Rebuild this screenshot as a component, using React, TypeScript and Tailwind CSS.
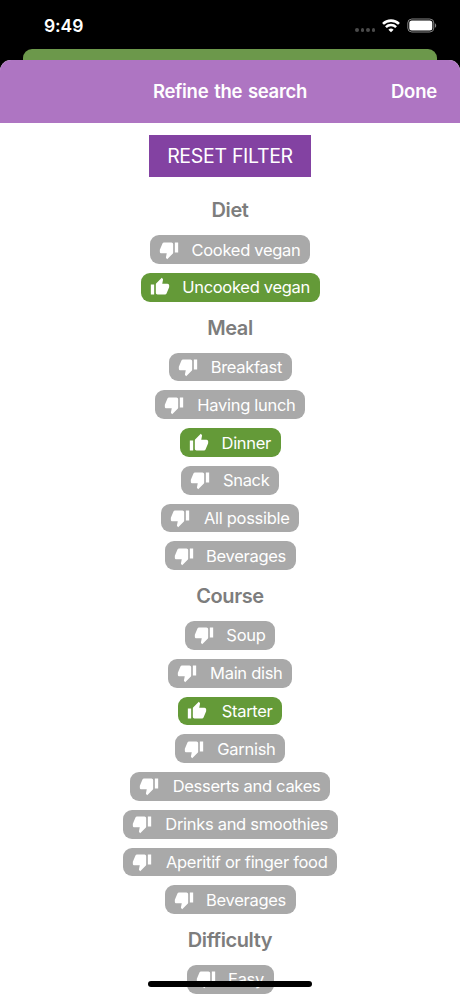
import { useState } from 'react';
import { MdThumbDown, MdThumbUp } from 'react-icons/md';
import clsx from 'clsx';

interface FilterOption {
  id: string;
  label: string;
  width: number;
}

interface FilterGroup {
  title: string;
  options: FilterOption[];
}

const groups: FilterGroup[] = [
  {
    title: 'Diet',
    options: [
      { id: 'cooked', label: 'Cooked vegan', width: 160 },
      { id: 'uncooked', label: 'Uncooked vegan', width: 179 },
    ],
  },
  {
    title: 'Meal',
    options: [
      { id: 'breakfast', label: 'Breakfast', width: 123 },
      { id: 'lunch', label: 'Having lunch', width: 150 },
      { id: 'dinner', label: 'Dinner', width: 101 },
      { id: 'snack', label: 'Snack', width: 98 },
      { id: 'all', label: 'All possible', width: 138 },
      { id: 'meal-beverages', label: 'Beverages', width: 131 },
    ],
  },
  {
    title: 'Course',
    options: [
      { id: 'soup', label: 'Soup', width: 90 },
      { id: 'main', label: 'Main dish', width: 124 },
      { id: 'starter', label: 'Starter', width: 104 },
      { id: 'garnish', label: 'Garnish', width: 110 },
      { id: 'desserts', label: 'Desserts and cakes', width: 200 },
      { id: 'drinks', label: 'Drinks and smoothies', width: 215 },
      { id: 'aperitif', label: 'Aperitif or finger food', width: 214 },
      { id: 'course-beverages', label: 'Beverages', width: 131 },
    ],
  },
  {
    title: 'Difficulty',
    options: [{ id: 'easy', label: 'Easy', width: 87 }],
  },
];

function StatusBar() {
  return (
    <div className="flex h-[49px] shrink-0 items-start justify-between pl-[44px] pr-[23px] text-white">
      <span className="mt-[14px] text-[17.5px] font-semibold leading-[24px] tracking-[-0.1px]">9:49</span>
      <div className="mt-[18px] flex items-center">
        <div className="mr-[7px] mt-[9px] flex gap-[2px]">
          {[0, 1, 2, 3].map((dot) => (
            <span key={dot} className="h-[3.5px] w-[3.5px] rounded-full bg-[#4b4b4b]" />
          ))}
        </div>
        <svg className="mr-[7px] h-[14px] w-[18px]" viewBox="0 0 18 14" fill="none" stroke="white">
          <path d="M1 4.9a11.4 11.4 0 0 1 16 0" strokeWidth="2.6" />
          <path d="M3.9 8.2a7.3 7.3 0 0 1 10.2 0" strokeWidth="2.5" />
          <path d="M9 13.3L6.4 10.8a3.7 3.7 0 0 1 5.2 0z" fill="white" stroke="none" />
        </svg>
        <svg className="h-[15px] w-[30px]" viewBox="0 0 30 15">
          <rect x="0.8" y="1" width="26" height="13" rx="4" fill="none" stroke="#858585" strokeWidth="1" />
          <rect x="2.3" y="2.5" width="23" height="10" rx="2.5" fill="white" />
          <path d="M28 5.2c1.6.8 1.6 3.8 0 4.6z" fill="#858585" />
        </svg>
      </div>
    </div>
  );
}

interface ChipProps {
  option: FilterOption;
  active: boolean;
  onToggle: () => void;
}

function Chip({ option, active, onToggle }: ChipProps) {
  const Icon = active ? MdThumbUp : MdThumbDown;

  return (
    <button
      type="button"
      onClick={onToggle}
      style={{ width: option.width }}
      className={clsx(
        'mb-[9px] flex h-[28.75px] shrink-0 items-center justify-between whitespace-nowrap rounded-[9px] pl-[9px] pr-[9.5px] text-white',
        active ? 'bg-[#649a38]' : 'bg-[#a9a9a9]'
      )}
    >
      <Icon className="h-[20px] w-[20px] shrink-0" />
      <span className="text-[16.5px] leading-[24px] tracking-[-0.3px]">{option.label}</span>
    </button>
  );
}

export default function App() {
  const [selected, setSelected] = useState<string[]>(['uncooked', 'dinner', 'starter']);

  const toggle = (id: string) => {
    setSelected((prev) => (prev.includes(id) ? prev.filter((item) => item !== id) : [...prev, id]));
  };

  return (
    <div className="relative flex h-[996px] w-[460px] flex-col overflow-hidden bg-black font-['Inter',sans-serif]">
      <StatusBar />
      {/* edge of the screen underneath the sheet */}
      <div className="mx-[23px] h-[11px] shrink-0 rounded-t-[9px] bg-[#6c984b]" />

      <div className="flex min-h-0 flex-1 flex-col overflow-hidden rounded-t-[11px] bg-white">
        <header className="grid h-[63px] shrink-0 grid-cols-[1fr_auto_1fr] items-center bg-[#ae75c2] text-[18.5px] font-semibold text-white">
          <h1 className="col-start-2 tracking-[-0.3px] [word-spacing:1.5px]">Refine the search</h1>
          <button type="button" className="justify-self-end pr-[23px] tracking-[-0.2px]">
            Done
          </button>
        </header>

        <main className="flex flex-col items-center overflow-hidden">
          <button
            type="button"
            onClick={() => setSelected([])}
            className="mb-[16.4px] mt-[12px] h-[42px] w-[162px] shrink-0 bg-[#8342a2] pt-px text-[19.5px] tracking-[-0.3px] text-white"
          >
            RESET FILTER
          </button>

          {groups.map((group) => (
            <section key={group.title} className="flex shrink-0 flex-col items-center">
              <h2 className="flex h-[41.9px] items-start pt-[3px] text-[20px] font-semibold leading-[28px] tracking-[-0.4px] text-[#7d7d7d]">
                {group.title}
              </h2>
              {group.options.map((option) => (
                <Chip
                  key={option.id}
                  option={option}
                  active={selected.includes(option.id)}
                  onToggle={() => toggle(option.id)}
                />
              ))}
            </section>
          ))}
        </main>
      </div>

      <div className="absolute bottom-[9px] left-[148px] h-[6px] w-[164px] rounded-full bg-black" />
    </div>
  );
}
